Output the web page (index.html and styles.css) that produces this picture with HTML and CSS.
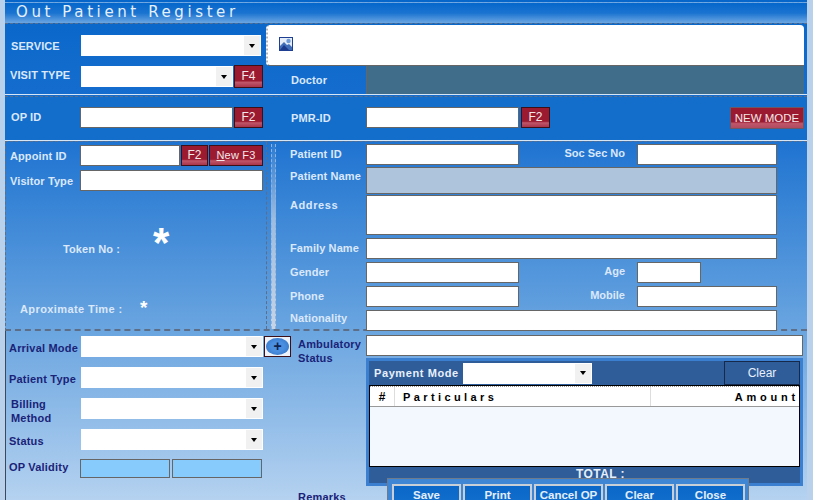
FILE: index.html
```html
<!DOCTYPE html>
<html lang="en">
<head>
<meta charset="utf-8">
<title>Out Patient Register</title>
<link rel="stylesheet" href="styles.css">
</head>
<body>
<main class="app">
  <header class="title">Out Patient Register</header>

  <section class="sec-service">
    <div class="svc-left">
      <div class="row svc-row1">
        <label class="lb lb-left">SERVICE</label>
        <div class="sel w180"><span class="arr"><i></i></span></div>
      </div>
      <div class="row svc-row2">
        <label class="lb lb-left">VISIT TYPE</label>
        <div class="sel w152"><span class="arr"><i></i></span></div>
        <button class="fk fk-f4">F4</button>
      </div>
    </div>
    <div class="svc-right">
      <div class="photo">
        <svg class="pic" width="14" height="14" viewBox="0 0 14 14">
          <rect x="0" y="0" width="14" height="14" fill="#e4edf8"/>
          <path d="M1 13V9l4-4 3 3 2-1 3 3v3z" fill="#3f6db8"/>
          <circle cx="9.5" cy="4" r="2.2" fill="#6f9ad6"/>
          <path d="M1 13l4-5 5 5z" fill="#1c3a8c"/>
          <rect x=".5" y=".5" width="13" height="13" fill="none" stroke="#1f3f92"/>
        </svg>
      </div>
      <div class="doc-row">
        <label class="lb doc-lb">Doctor</label>
        <div class="doc-box"></div>
      </div>
    </div>
  </section>

  <section class="sec-id">
    <label class="lb lb-left id-lb">OP ID</label>
    <input class="in w153">
    <button class="fk">F2</button>
    <label class="lb pmr-lb">PMR-ID</label>
    <input class="in w153">
    <button class="fk fk-pmr">F2</button>
    <button class="newmode">NEW MODE</button>
  </section>

  <section class="sec-pat">
    <div class="pat-left">
      <div class="row appt">
        <label class="lb lb-left lb-75">Appoint ID</label>
        <input class="in w100">
        <button class="fk">F2</button>
        <button class="fk fk-new"><u>N</u>ew F3</button>
      </div>
      <div class="row vis">
        <label class="lb lb-left lb-75">Visitor Type</label>
        <input class="in w183">
      </div>
      <div class="token">
        <span class="lb token-lb">Token No :</span>
        <span class="star-big">*</span>
      </div>
      <div class="approx">
        <span class="lb approx-lb">Aproximate Time :</span>
        <span class="star-small">*</span>
      </div>
    </div>
    <div class="split"><i></i></div>
    <div class="pat-right">
      <div class="pr h21">
        <label class="lb pl">Patient ID</label>
        <input class="in w153">
        <label class="lb rl">Soc Sec No</label>
        <input class="in w140">
      </div>
      <div class="pr r-name">
        <label class="lb pl lb-top">Patient Name</label>
        <div class="in w411 h27 grey"></div>
      </div>
      <div class="pr r-addr">
        <label class="lb pl lb-top addr-lb">Address</label>
        <textarea class="in w411 h40"></textarea>
      </div>
      <div class="pr h21 r-gap3">
        <label class="lb pl">Family Name</label>
        <input class="in w411">
      </div>
      <div class="pr h21 r-gap3">
        <label class="lb pl">Gender</label>
        <input class="in w153">
        <label class="lb rl">Age</label>
        <input class="in w64">
      </div>
      <div class="pr h21 r-gap3">
        <label class="lb pl">Phone</label>
        <input class="in w153">
        <label class="lb rl">Mobile</label>
        <input class="in w140">
      </div>
      <div class="pr h21 r-gap3">
        <label class="lb pl nat-lb">Nationality</label>
        <input class="in w411">
      </div>
    </div>
  </section>

  <section class="sec-bottom">
    <div class="bt-left">
      <div class="row brow">
        <label class="lb dk b-lb">Arrival Mode</label>
        <div class="sel w182"><span class="arr"><i></i></span></div>
        <button class="plus"><span>+</span></button>
      </div>
      <div class="row brow">
        <label class="lb dk b-lb">Patient Type</label>
        <div class="sel w182"><span class="arr"><i></i></span></div>
      </div>
      <div class="row brow">
        <label class="lb dk b-lb bill">Billing<br>Method</label>
        <div class="sel w182"><span class="arr"><i></i></span></div>
      </div>
      <div class="row brow">
        <label class="lb dk b-lb">Status</label>
        <div class="sel w182"><span class="arr"><i></i></span></div>
      </div>
      <div class="row b5">
        <label class="lb dk b-lb val-lb">OP Validity</label>
        <div class="val"></div>
        <div class="val"></div>
      </div>
    </div>
    <div class="bt-right">
      <div class="amb">
        <label class="lb dk amb-lb">Ambulatory<br>Status</label>
        <input class="in w437">
      </div>
      <div class="pay">
        <div class="pay-top">
          <label class="pay-lb">Payment Mode</label>
          <div class="sel w129"><span class="arr"><i></i></span></div>
          <button class="pay-clear">Clear</button>
        </div>
        <table class="grid">
          <thead>
            <tr><th class="c-n">#</th><th class="c-p">Particulars</th><th class="c-a">Amount</th></tr>
          </thead>
          <tbody><tr><td colspan="3"></td></tr></tbody>
        </table>
        <div class="total">TOTAL :</div>
      </div>
      <label class="lb dk remarks">Remarks</label>
    </div>
    <div class="actions">
      <button class="act">Save</button>
      <button class="act">Print</button>
      <button class="act">Cancel OP</button>
      <button class="act">Clear</button>
      <button class="act">Close</button>
    </div>
  </section>
</main>
</body>
</html>
```
FILE: styles.css
```css
* { box-sizing: border-box; }
html, body { margin: 0; height: 500px; overflow: hidden; }
body { background: #b9d1ea; font-family: "Liberation Sans", Arial, sans-serif; }

.app {
  position: relative;
  width: 802px;
  height: 500px;
  margin-left: 5px;
  padding-top: 2px;
  overflow: hidden;
  background: linear-gradient(#0766c9 0, #1a70d0 130px, #2a7bd3 170px, #6aa5e0 330px, #b5d2f0 500px);
}

.title {
  height: 21px;
  padding-left: 11px;
  font: 15px/18px "DejaVu Sans", sans-serif;
  letter-spacing: 3.6px;
  color: #e6f0fb;
  background: linear-gradient(#0567cb 0, #1a73d0 50%, #6ba6e2 100%);
  border-top: 1px dashed #74a8e0;
}

.row { display: flex; align-items: flex-start; }

.lb {
  display: block;
  font-size: 11px;
  font-weight: 700;
  line-height: 14px;
  letter-spacing: .1px;
  color: #dbe8fb;
  white-space: nowrap;
}
.lb-left { padding-left: 5px; }
.dk { color: #1a2378; letter-spacing: .2px; }

.in {
  display: block;
  height: 21px;
  padding: 0;
  margin: 0;
  background: #fff;
  border: 1px solid #666;
  border-radius: 0;
  resize: none;
  outline: none;
}
.w64 { width: 64px; }
.w100 { width: 100px; }
.w140 { width: 140px; }
.w153 { width: 153px; }
.w183 { width: 183px; }
.w411 { width: 411px; }
.w437 { width: 437px; }
.h27 { height: 27px; }
.h40 { height: 40px; }
.grey { background: #aec3dc; }

.sel {
  height: 21px;
  background: #fff;
  display: flex;
  justify-content: flex-end;
  padding: 1px;
}
.w180 { width: 180px; }
.w152 { width: 152px; }
.w182 { width: 182px; }
.w129 { width: 129px; }
.arr {
  width: 16px;
  background: #f1f1f1;
  display: flex;
  align-items: center;
  justify-content: center;
}
.arr i {
  display: block;
  width: 0;
  height: 0;
  border: 3.5px solid transparent;
  border-top: 4px solid #000;
  border-bottom: 0;
}

.fk {
  display: block;
  width: 29px;
  height: 21px;
  margin: 0 0 0 1px;
  padding: 0;
  font: 12px/19px "Liberation Sans", sans-serif;
  color: #f3e8e8;
  border: 1px solid #3c1016;
  border-radius: 0;
  background: linear-gradient(#9c1a30 0, #9c1a30 70%, #c0566a 78%, #a8344a 100%);
}

/* service */
.sec-service {
  height: 72px;
  display: flex;
  border-top: 1px dashed #5d6f88;
  border-bottom: 1px solid #d7e6f6;
}
.svc-left { width: 261px; padding-top: 11px; }
.svc-row1 { align-items: center; height: 21px; }
.svc-row1 .lb { width: 76px; padding-left: 6px; }
.svc-row2 { margin-top: 9px; height: 23px; }
.svc-row2 .lb { width: 76px; padding-top: 3px; }
.svc-row2 .sel { margin-top: 1px; }
.fk-f4 { height: 23px; }
.svc-right { width: 538px; }
.photo {
  height: 41px;
  margin-top: 1px;
  background: #fff;
  border-radius: 4px 4px 0 4px;
  border-bottom: 1px solid #666;
  border-left: 2px dotted #b5b5b5;
  padding: 12px 0 0 11px;
}
.pic { display: block; }
.doc-row { display: flex; height: 28px; }
.doc-lb { width: 100px; padding: 7px 0 0 25px; }
.doc-box { flex: 1; background: #3f6d8a; border-left: 1px solid #666; }

/* id */
.sec-id {
  height: 45px;
  margin-top: 1px;
  padding-top: 10px;
  display: flex;
  align-items: flex-start;
  border-top: 1px dashed #5d6f88;
  border-bottom: 1px solid #d7e6f6;
  background: #136ecb;
}
.id-lb { width: 75px; padding: 3px 0 0 6px; }
.pmr-lb { width: 75px; margin-left: 28px; padding-top: 4px; }
.fk-pmr { margin-left: 2px; }
.newmode {
  width: 74px;
  height: 22px;
  margin: 0 3px 0 auto;
  padding: 0;
  font: 11.5px/20px "Liberation Sans", sans-serif;
  color: #f3e8e8;
  border: 1px solid #6a5868;
  border-radius: 0;
  background: linear-gradient(#9c1a30 0, #9c1a30 68%, #c0566a 78%, #b04a60 100%);
}

/* patient */
.sec-pat {
  height: 190px;
  display: flex;
  border-top: 1px dashed #5d6f88;
  border-bottom: 2px dashed #5d6f88;
  border-left: 1px dashed #5d6f88;
}
.pat-left {
  width: 261px;
  padding-top: 3px;
  border-right: 1px dashed #5d6f88;
}
.lb-75 { width: 74px; padding-left: 4px; padding-top: 4px; }
.appt .fk { width: 27px; }
.appt .fk-new { width: 54px; font-size: 11px; letter-spacing: .2px; }
.vis { margin-top: 4px; }
.token { display: flex; padding: 31px 0 0 57px; }
.token-lb { padding-top: 20px; width: 90px; }
.star-big { font: 700 42px/42px "Liberation Sans", sans-serif; color: #fff; height: 30px; }
.approx { display: flex; padding: 46px 0 0 14px; }
.approx-lb { width: 120px; letter-spacing: .4px; }
.star-small { font: 700 19px/18px "Liberation Sans", sans-serif; color: #fff; margin-top: -3px; }
.split { width: 11px; display: flex; justify-content: center; }
.split i {
  display: block;
  width: 5px;
  height: 185px;
  margin: 2px 0 0 1px;
  background: linear-gradient(#2a7bd3, #9cbce0 40%, #c6d4e6);
  border-left: 1px dashed #8fb3da;
  border-right: 1px dashed #8fb3da;
}
.pat-right { flex: 1; padding-top: 2px; }
.pr { display: flex; align-items: flex-start; }
.h21 { height: 21px; }
.pl { width: 76px; margin-left: 12px; padding-top: 3px; }
.rl { width: 106px; margin-right: 12px; text-align: right; padding-top: 2px; letter-spacing: 0; }
.r-name { margin-top: 2px; }
.lb-top { padding-top: 2px; }
.r-addr { margin-top: 1px; }
.addr-lb { padding-top: 3px; letter-spacing: .6px; }
.nat-lb { padding-top: 1px; }
.r-gap3 { margin-top: 3px; }

/* bottom */
.sec-bottom {
  position: relative;
  height: 170px;
  display: flex;
  border-left: 1px solid #3a4a5e;
}
.bt-left { width: 293px; padding-top: 5px; }
.brow { height: 21px; margin-bottom: 10px; }
.b-lb { width: 75px; padding-left: 3px; padding-top: 5px; }
.plus {
  width: 27px;
  height: 21px;
  margin: 0 0 0 1px;
  padding: 0;
  border: 1px solid #3c1016;
  border-radius: 0;
  background: #eef3fa;
  display: flex;
  align-items: center;
  justify-content: center;
}
.plus span {
  display: block;
  width: 23px;
  height: 17px;
  border-radius: 50%;
  background: radial-gradient(ellipse at center, #4a8fe0 40%, #2f6fc0 100%);
  color: #10234f;
  font: 700 14px/16px "Liberation Sans", sans-serif;
}
.bill { padding-left: 5px; padding-top: 0; margin-top: -1px; }
.b5 { margin-top: -1px; gap: 2px; }
.val-lb { padding-top: 1px; margin-right: -3px; }
.val { width: 90px; height: 19px; background: #86cbfb; border: 1px solid #666; }
.bt-right { flex: 1; padding-top: 4px; }
.amb { display: flex; height: 21px; }
.amb-lb { width: 68px; margin-left: -1px; padding-top: 2px; }
.pay {
  width: 437px;
  height: 128px;
  margin: 2px 0 0 67px;
  background: #2f5d9a;
  border: 3px solid #3a7fd0;
}
.pay-top { display: flex; align-items: center; height: 24px; }
.pay-lb {
  width: 94px;
  padding-left: 5px;
  font: 700 11px/14px "Liberation Sans", sans-serif;
  color: #e8f0fb;
  letter-spacing: .6px;
  white-space: nowrap;
}
.pay-clear {
  width: 76px;
  height: 24px;
  margin-left: auto;
  padding: 0;
  font: 12px/20px "Liberation Sans", sans-serif;
  color: #e8f0fb;
  background: #2f5d9a;
  border: 1px solid #16294a;
  border-radius: 0;
}
.grid {
  display: block;
  width: 431px;
  height: 82px;
  background: #f3f8fe;
  border: 1px solid #000;
  border-collapse: collapse;
}
.grid thead { display: block; }
.grid thead tr { display: flex; height: 21px; background: #fff; border-bottom: 1px solid #999; border-top: 1px dotted #999; }
.grid th {
  display: block;
  padding: 0;
  font: 700 11px/20px "Liberation Sans", sans-serif;
  letter-spacing: 3.4px;
  color: #000;
}
.grid .c-n { width: 25px; text-align: center; border-right: 1px solid #ddd; letter-spacing: 0; font-size: 12px; }
.grid .c-p { width: 256px; padding-left: 8px; text-align: left; border-right: 1px solid #ddd; }
.grid .c-a { flex: 1; text-align: right; padding-right: 0; letter-spacing: 3.8px; }
.grid tbody { display: none; }
.total {
  height: 16px;
  text-align: center;
  font: 700 12px/14px "Liberation Sans", sans-serif;
  color: #e8f0fb;
  letter-spacing: .4px;
  padding-left: 32px;
}
.remarks { margin-top: 4px; margin-left: -1px; }

.actions {
  position: absolute;
  left: 381px;
  top: 147px;
  width: 362px;
  height: 24px;
  padding: 5px 4px 0;
  display: flex;
  gap: 2px;
  background: #3f86d4;
  border: 1px solid #6d7b8c;
  border-bottom: 0;
}
.act {
  width: 69px;
  height: 30px;
  margin: 0;
  padding: 0 0 8px;
  flex: none;
  font: 700 11.5px/14px "Liberation Sans", sans-serif;
  color: #e3eefb;
  border: 2px solid #c9cfd6;
  border-radius: 0;
  background: linear-gradient(#0a66c8, #1873cf);
}
```
